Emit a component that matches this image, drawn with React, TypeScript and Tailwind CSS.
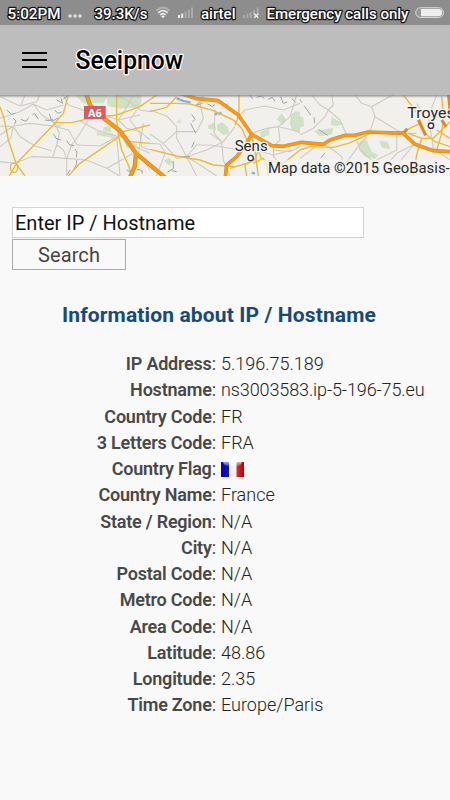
import React from "react";

const rows: [string, string][] = [
  ["IP Address", "5.196.75.189"],
  ["Hostname", "ns3003583.ip-5-196-75.eu"],
  ["Country Code", "FR"],
  ["3 Letters Code", "FRA"],
  ["Country Flag", "flag"],
  ["Country Name", "France"],
  ["State / Region", "N/A"],
  ["City", "N/A"],
  ["Postal Code", "N/A"],
  ["Metro Code", "N/A"],
  ["Area Code", "N/A"],
  ["Latitude", "48.86"],
  ["Longitude", "2.35"],
  ["Time Zone", "Europe/Paris"],
];

const minorRoads = [
  "M0 20 L60 48 L110 35 L120 15",
  "M0 85 L60 65 L100 42 L140 60 L190 45",
  "M75 15 L62 48",
  "M0 135 L40 108 L90 100 L160 108 L205 120 L232 165",
  "M0 108 L40 110 L60 140 L105 168 L155 182",
  "M40 110 L32 145 L0 170",
  "M0 215 L45 220 L95 200 L158 202 L200 205 L260 210 L320 235 L358 258",
  "M100 42 L125 75 L165 100 L178 130 L170 165 L158 202",
  "M170 165 L190 180 L200 205 L200 258",
  "M255 62 L205 45 L190 15",
  "M265 90 L240 130 L215 165 L200 205",
  "M240 92 L290 120 L350 138",
  "M232 165 L300 168 L350 140",
  "M350 140 L355 195 L360 258",
  "M320 235 L400 190",
  "M350 15 L380 30 L420 60 L450 65",
  "M400 15 L375 60 L355 90 L380 115 L420 125 L450 150",
  "M410 60 L390 90 L420 130 L425 170 L450 180",
  "M300 70 L355 90 L420 75",
  "M430 100 L415 190 L450 240",
  "M365 125 L395 165 L450 190",
  "M450 60 L500 78 L530 110 L530 145 L560 200 L590 258",
  "M450 132 L490 160 L530 125 L590 125 L610 85 L600 40 L610 15",
  "M450 160 L480 162 L495 190 L470 258",
  "M490 160 L530 205 L560 200 L590 165 L630 165 L720 180 L775 182",
  "M560 200 L620 180 L670 155 L705 110",
  "M560 200 L600 225 L650 258",
  "M630 130 L665 155 L670 210 L690 258",
  "M645 58 L642 130 L665 155",
  "M710 85 L735 60 L795 48 L850 60 L900 40",
  "M755 130 L800 115 L835 110 L870 80 L890 15",
  "M835 110 L840 150 L820 170 L820 200 L850 230 L900 240",
  "M835 110 L900 125",
  "M820 180 L870 185 L900 170",
  "M775 182 L820 195 L875 180",
  "M935 15 L960 45 L985 60 L1000 45 L995 15",
  "M985 60 L975 80 L940 115 L900 135",
  "M985 60 L1020 90 L1040 135",
  "M1065 15 L1085 40 L1115 50 L1125 80 L1110 125",
  "M1115 50 L1160 25 L1180 15",
  "M1125 80 L1190 120 L1215 130 L1250 130",
  "M900 205 L940 175 L965 160 L1000 180 L1025 200 L1040 258",
  "M1065 135 L1080 180 L1120 215 L1120 258",
  "M1100 140 L1070 175 L1045 210 L1020 235",
  "M1120 215 L1190 180 L1190 135",
  "M1160 225 L1190 190 L1240 165",
  "M1240 165 L1200 215 L1240 258",
  "M1310 15 L1285 80 L1290 110",
  "M1290 110 L1300 175 L1350 210",
  "M1250 40 L1270 80",
];

const yellowRoads = [
  "M0 50 L12 85 L25 150 L48 220 L75 258",
  "M28 258 L50 220 L160 105 L190 70 L205 15",
  "M160 98 L215 98 L280 83 L350 75 L420 50 L470 15",
  "M350 15 L350 90 L355 135 L365 180 L385 225 L395 258",
  "M205 258 L240 220 L350 145 L370 125 L450 105",
  "M355 135 L390 155 L450 160",
  "M450 65 L500 52 L530 20",
  "M450 40 L530 40 L570 42 L640 62 L700 90 L725 115 L745 160",
  "M450 178 L530 198 L600 210 L640 225 L700 230",
  "M717 15 L717 78 L705 105",
  "M690 235 L740 220 L765 208 L775 180",
  "M755 135 L765 185 L775 258",
  "M765 208 L735 225 L740 258",
  "M760 220 L790 205 L800 225 L805 258",
  "M760 160 L775 180 L785 210 L850 220 L900 180",
  "M900 180 L930 170 L1000 172 L1045 160 L1080 145 L1110 130 L1210 125 L1260 100",
  "M1210 15 L1245 60 L1260 90 L1275 130 L1305 155 L1350 170",
  "M1225 130 L1265 145 L1250 195 L1240 258",
  "M1265 145 L1300 145 L1320 125 L1350 95",
  "M1325 20 L1330 80 L1325 130 L1310 180",
  "M1310 120 L1350 145",
];

const borders = [
  "M20 60 l15 13 l10 -3 M40 85 l8 8 l-4 10 M62 88 l16 6 l8 -11 M97 75 l6 -5 l12 17 M135 90 l12 2 l12 -5 M148 72 l8 22 l18 -10 M165 60 l8 10 l12 -4 M170 30 l18 10 l-5 -15 M190 28 l12 -10",
  "M160 132 l8 13 l15 5 M200 152 l8 12 l15 3 M225 178 l6 8 l-2 16 M230 210 l0 12 l-8 16 M210 240 l-8 14 M380 240 l10 5 M410 238 l15 3 l2 10",
  "M600 35 l-12 10 M590 45 l18 -5 M575 73 l10 15 l-8 8 M572 100 l10 20 l6 10 M583 155 l-8 18 M545 200 l25 0 M520 213 l0 22 l-18 12 M515 242 l15 3 M622 42 l15 7 l8 -6 M665 35 l8 12 l10 -5",
  "M750 15 l8 12 M770 22 l15 -4 l8 8 M805 28 l12 -6 l8 12 M842 20 l8 20 l12 -4 M875 25 l12 12 M900 28 l6 10 M912 47 l20 28 M942 82 l2 18 M955 118 l28 18 M975 188 l-12 16",
];

function MapView() {
  return (
    <svg
      viewBox="0 15 1350 243"
      className="block h-[81px] w-full shrink-0 bg-[#f2f0ec]"
      preserveAspectRatio="none"
      fontFamily="Roboto, sans-serif"
    >
      <g fill="#d0e2c5">
        <path d="M225 15 h100 l-15 25 h-60 z M320 20 l60 -5 h45 l-2 36 l-60 5 l-40 -8 z M310 112 l22 -5 l2 20 l-25 -4z M290 124 l50 8 l5 12 l-55 -8z M370 150 l42 12 l-8 15 l-25 -5z" />
        <path d="M162 108 l25 -5 l-10 10z M530 98 l8 -12 l6 13z M625 105 l20 -8 l3 23 l-24 -4z M650 105 l15 -10 l18 15 l5 20 l-18 5 l-18 -15z M492 212 l15 -8 l14 14 l-15 8z M780 125 l28 -10 v20 l-25 8z M830 88 l15 -18 l14 20 l-10 15z M872 75 l16 -12 l12 3 v65 l-25 -10 l-5 -20z" />
        <path d="M900 78 l10 5 l2 25 l-12 5z M942 122 l58 -8 l-5 20 l-38 4z M995 80 l35 22 l-20 7 l-18 -5z M1075 155 l25 -5 l15 35 l20 10 l-10 12 l-30 -7 l-15 -20z M1138 153 l25 2 l8 22 l-25 -4z" />
      </g>
      <g fill="none" stroke="#d0cbc1" strokeWidth="3.3" strokeLinejoin="round">
        {minorRoads.map((d) => <path key={d} d={d} />)}
      </g>
      <g fill="none" stroke="#a2a4a5" strokeWidth="3">
        {borders.map((d) => <path key={d} d={d} />)}
      </g>
      <path
        d="M530 25 l20 8 l22 5 M645 75 l8 -8 M655 73 l10 -5 M755 248 l10 3"
        fill="none"
        stroke="#82b1f0"
        strokeWidth="7"
      />
      <g fill="none" stroke="#ecbb37" strokeWidth="4.2" strokeLinejoin="round">
        {yellowRoads.map((d) => <path key={d} d={d} />)}
        <ellipse cx="42" cy="233" rx="11" ry="14" />
      </g>
      <g fill="none" stroke="#e18b16" strokeWidth="13" strokeLinejoin="round">
        <path d="M258 10 L270 45 L315 88 L360 122 L408 190 L495 262 M408 190 L404 230 L390 262" />
        <path d="M480 4 L540 10 L590 26 L655 32 L715 75 L755 133 L815 167 L850 169 L905 157 L970 163 L990 150 L1035 136 L1065 136 L1105 126 L1210 130 L1245 163 L1300 182 L1350 185" strokeWidth="11" />
        <path d="M755 133 L740 160 L710 200 L680 225 L676 262" strokeWidth="11" />
        <path d="M1210 130 L1222 116 M1255 90 L1277 136 M1345 10 L1350 60 M1325 90 L1338 110" strokeWidth="9" />
      </g>
      <g fill="none" stroke="#f69a19" strokeWidth="8" strokeLinejoin="round">
        <path d="M258 10 L270 45 L315 88 L360 122 L408 190 L495 262 M408 190 L404 230 L390 262" />
        <path d="M540 10 L590 26 L655 32 L715 75 L755 133 L815 167 L850 169 L905 157 L970 163 L990 150 L1035 136 L1065 136 L1105 126 L1210 130 L1245 163 L1300 182 L1350 185" />
        <path d="M755 133 L740 160 L710 200 L680 225 L676 262" />
      </g>
      <rect x="252" y="48" width="65" height="39" fill="#d85b62" />
      <text x="264" y="80" fontSize="33" fontWeight="700" fill="#fff" textLength="41" lengthAdjust="spacingAndGlyphs" fontFamily="Open Sans, sans-serif">A6</text>
      <rect x="782" y="209" width="568" height="49" fill="#f5f5f5" fillOpacity="0.72" />
      <g fill="#292929" stroke="#f7f5f1" strokeWidth="8" paintOrder="stroke" strokeLinejoin="round">
        <text x="704" y="184" fontSize="43" textLength="99" lengthAdjust="spacingAndGlyphs">Sens</text>
        <text x="1222" y="84" fontSize="43" textLength="142" lengthAdjust="spacingAndGlyphs">Troyes</text>
      </g>
      <g fill="#fff" stroke="#333" strokeWidth="4">
        <circle cx="752" cy="204" r="8" />
        <circle cx="1293" cy="107" r="8" />
      </g>
      <text x="804" y="250" fontSize="45" fill="#292929" textLength="545" lengthAdjust="spacingAndGlyphs">Map data ©2015 GeoBasis-</text>
      <linearGradient id="shade" x1="0" x2="0" y1="0" y2="1">
        <stop stopColor="#777" stopOpacity=".75" />
        <stop offset="1" stopColor="#777" stopOpacity="0" />
      </linearGradient>
      <rect y="15" width="1350" height="9" fill="url(#shade)" />
    </svg>
  );
}

const outlined = "fill-white stroke-[#151515] stroke-[2.6px] [paint-order:stroke]";

function StatusBar() {
  return (
    <svg viewBox="0 0 450 25" className="block h-[25px] w-full shrink-0 bg-[#8d8d8d]" fontFamily="Roboto, sans-serif" fontSize="15.5" fontWeight="500" strokeLinejoin="round">
      <text className={outlined} x="7.5" y="18.5" textLength="53" lengthAdjust="spacingAndGlyphs">5:02PM</text>
      <g fill="#dedede">
        <circle cx="70" cy="16" r="1.8" />
        <circle cx="75" cy="16" r="1.8" />
        <circle cx="80" cy="16" r="1.8" />
      </g>
      <text className={outlined} x="94.5" y="18.5" textLength="53" lengthAdjust="spacingAndGlyphs">39.3K/s</text>
      <g fill="none" strokeWidth="1.7">
        <path d="M156.3 10.7 Q163 4.3 169.7 10.7" stroke="#b0b0b0" />
        <path d="M158.2 12.8 Q163 8.4 167.8 12.8" stroke="#e5e5e5" />
        <path d="M160.2 14.9 Q163 12.4 165.8 14.9" stroke="#f0f0f0" />
      </g>
      <path d="M161 16 Q163 14.8 165 16 L163 18z" fill="#fff" />
      <path d="M178 15h2v3h-2z M181.2 13.5h2v4.5h-2z" fill="#eee" />
      <path d="M184.5 11.5h2v6.5h-2z M187.8 9.5h2v8.5h-2z M191 7.5h2v10.5h-2z" fill="#aaa" />
      <text className={outlined} x="201" y="18.5" textLength="34.5" lengthAdjust="spacingAndGlyphs">airtel</text>
      <path d="M243 15h2v3h-2z M246.4 13.5h2v4.5h-2z M249.7 12h2v6h-2z M253 10h2v5h-2z M256.7 7.5h2v7h-2z" fill="#aaa" />
      <path d="M254.3 13.8l4 4m0-4l-4 4" stroke="#eee" strokeWidth="1.5" />
      <text className={outlined} x="266.5" y="18.5" textLength="142" lengthAdjust="spacingAndGlyphs">Emergency calls only</text>
      <rect x="415.7" y="7.7" width="27.8" height="9.8" rx="4.9" fill="#999" stroke="#d8d8d8" />
      <path d="M421 9h17.5a3.6 3.6 0 0 1 0 7.2H421z" fill="#eee" />
    </svg>
  );
}

function Flag() {
  return (
    <svg viewBox="0 0 23 15" className="mt-px h-[15px] w-[23px]">
      <defs>
        <linearGradient id="blue"><stop stopColor="#0000d8" /><stop offset="1" stopColor="#17179a" /></linearGradient>
        <linearGradient id="red"><stop stopColor="#df3030" /><stop offset="1" stopColor="#b40000" /></linearGradient>
        <linearGradient id="gloss" x1="0" x2="0" y1="0" y2="1"><stop stopColor="#fff" stopOpacity=".65" /><stop offset="1" stopColor="#fff" stopOpacity=".15" /></linearGradient>
      </defs>
      <path d="M0 0h8v15H0z" fill="url(#blue)" />
      <path d="M8 0h7.5v15H8z" fill="#f1f1f4" />
      <path d="M15.5 0H23v15h-7.5z" fill="url(#red)" />
      <path d="M2 0h19q-1 4-5 4H7Q3 4 2 0z" fill="url(#gloss)" />
    </svg>
  );
}

export default function App() {
  return (
    <main className="flex h-[800px] w-[450px] flex-col overflow-hidden bg-[#f9f9f9] font-['Roboto',sans-serif]">
      <StatusBar />
      <header className="flex h-[70px] shrink-0 items-center bg-[#bdbdbd] pl-[22px]">
        <div className="flex w-[53px] flex-col gap-[5px]">
          <i className="h-0.5 w-[25px] bg-black" />
          <i className="h-0.5 w-[25px] bg-black" />
          <i className="h-0.5 w-[25px] bg-black" />
        </div>
        <svg viewBox="0 0 120 36" className="h-9 w-[120px]" fontFamily="Roboto, sans-serif">
          <text x="0.5" y="27" fontSize="25" fontWeight="500" fill="#000" stroke="#fff" strokeWidth="2.5" paintOrder="stroke" strokeLinejoin="round" textLength="107.5" lengthAdjust="spacingAndGlyphs">Seeipnow</text>
        </svg>
      </header>
      <MapView />
      <form className="mt-[31px] flex flex-col items-start pl-3">
        <div className="flex h-[31px] w-[352px] items-center border border-[#d2d2d2] bg-white pt-px pl-0.5 text-[20px] text-[#111]">Enter IP / Hostname</div>
        <button type="button" className="mt-px h-[31px] w-[114px] border border-[#aaa] text-[20px] leading-none tracking-[0.1px] text-[#444]">Search</button>
      </form>
      <h1 className="mt-[30px] ml-[62px] text-[21px] leading-[30px] font-bold tracking-[0.13px] whitespace-nowrap text-[#174a7c]">Information about IP / Hostname</h1>
      <dl className="mt-[21px] flex flex-col text-[18px] leading-[26.25px] text-[#484848]">
        {rows.map(([label, value]) => (
          <div key={label} className="flex h-[26.25px] items-center whitespace-nowrap">
            <dt className="w-[216px] text-right"><b className="font-semibold tracking-[-0.22px]">{label}</b>:</dt>
            <dd className={`ml-[5px] font-light text-[#222] ${value.length > 20 ? "tracking-[-0.11px]" : ""}`}>{value === "flag" ? <Flag /> : value}</dd>
          </div>
        ))}
      </dl>
    </main>
  );
}
